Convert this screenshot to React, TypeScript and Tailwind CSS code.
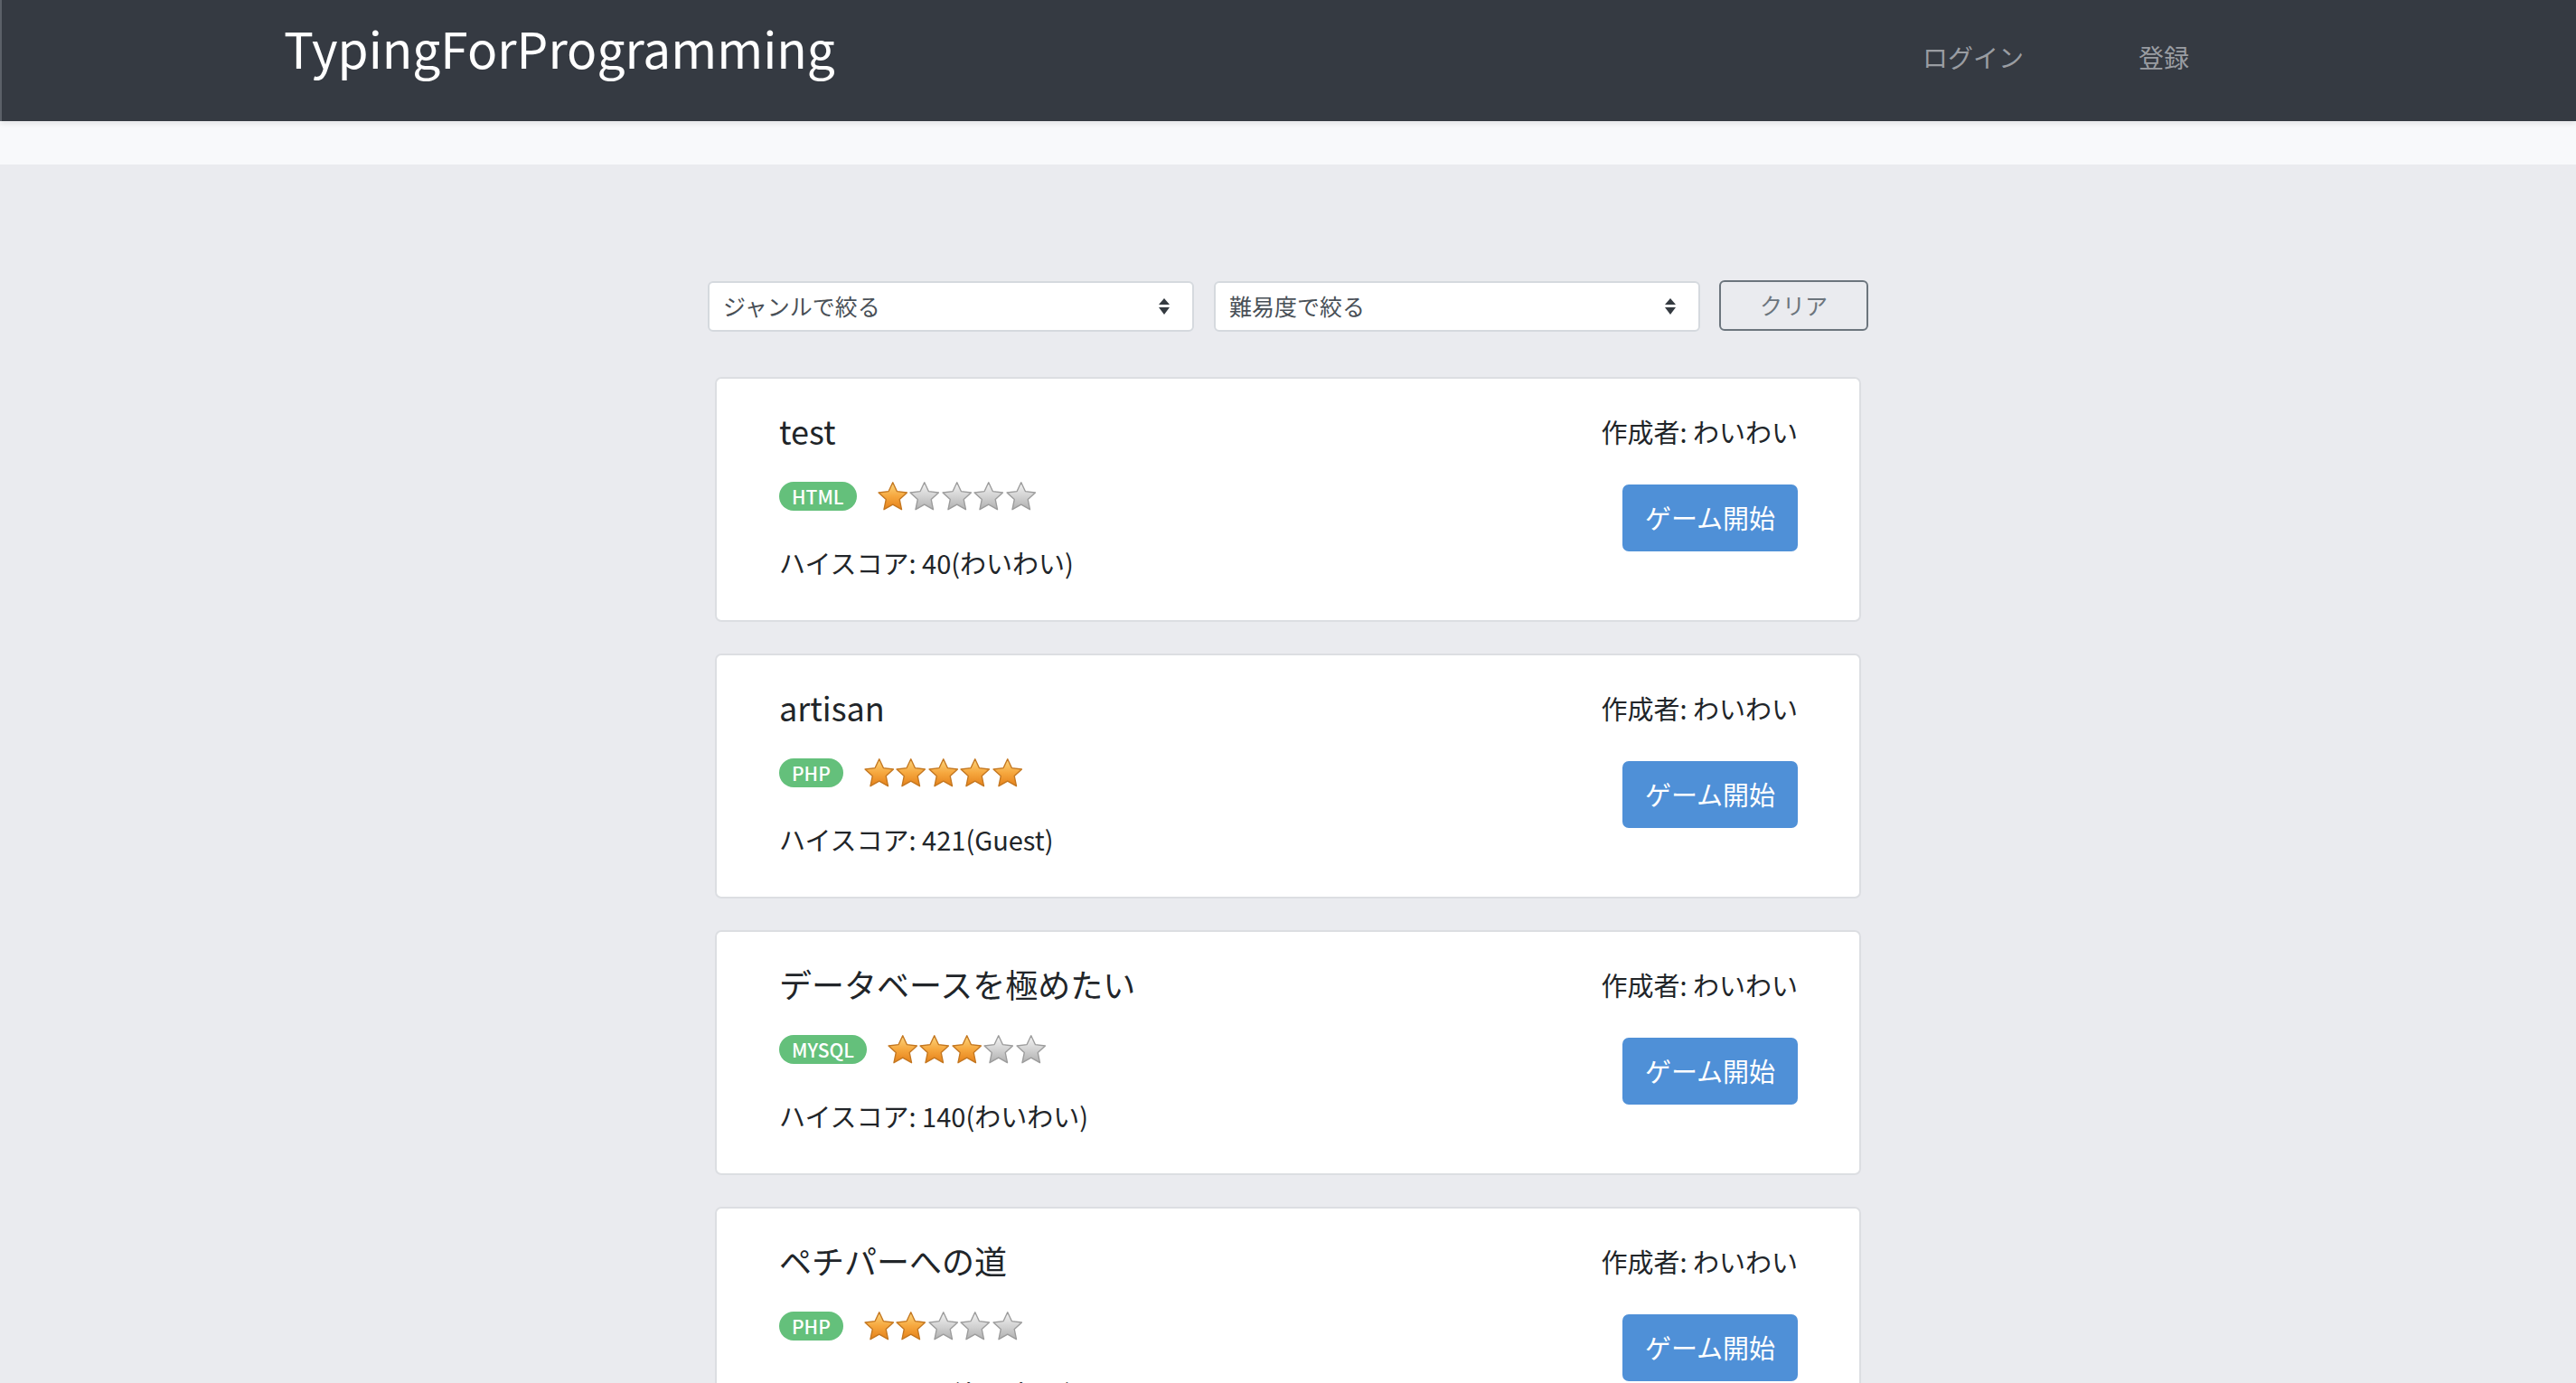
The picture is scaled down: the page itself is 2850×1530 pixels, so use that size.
import React from "react";

const FONT = { fontFamily: '"Noto Sans CJK JP", "Noto Sans", sans-serif' };

function Star({ on }: { on: boolean }) {
  return (
    <svg width="35.5" height="34" viewBox="0 0 36 34" className="block shrink-0">
      <defs>
        <linearGradient id="starOn" x1="0" y1="0" x2="0" y2="1">
          <stop offset="0" stopColor="#fcd67e" />
          <stop offset="0.5" stopColor="#f6a83f" />
          <stop offset="1" stopColor="#e5811a" />
        </linearGradient>
        <linearGradient id="starOff" x1="0" y1="0" x2="0" y2="1">
          <stop offset="0" stopColor="#f4f4f4" />
          <stop offset="0.55" stopColor="#d0d0d0" />
          <stop offset="1" stopColor="#b0b0b0" />
        </linearGradient>
      </defs>
      <path
        d="M18 1.5 L22.7 11.5 L33.9 12.9 L25.6 20.6 L27.9 31.9 L18 26.3 L8.1 31.9 L10.4 20.6 L2.1 12.9 L13.3 11.5 Z"
        fill={on ? "url(#starOn)" : "url(#starOff)"}
        stroke={on ? "#c47720" : "#9c9c9c"}
        strokeWidth="1.4"
        strokeLinejoin="round"
      />
    </svg>
  );
}

function SelectArrow() {
  return (
    <svg width="14" height="18" viewBox="0 0 14 18" className="block">
      <path d="M7 0 L13 7 L1 7 Z" fill="#343a40" />
      <path d="M1 10 L13 10 L7 18 Z" fill="#343a40" />
    </svg>
  );
}

type Item = { title: string; lang: string; level: number; score: string };

const items: Item[] = [
  { title: "test", lang: "HTML", level: 1, score: "ハイスコア: 40(わいわい)" },
  { title: "artisan", lang: "PHP", level: 5, score: "ハイスコア: 421(Guest)" },
  { title: "データベースを極めたい", lang: "MYSQL", level: 3, score: "ハイスコア: 140(わいわい)" },
  { title: "ペチパーへの道", lang: "PHP", level: 2, score: "ハイスコア: 80(わいわい)" },
];

function Card({ item }: { item: Item }) {
  return (
    <div className="flex justify-between rounded-[7px] border-2 border-[#dcdee2] bg-white pl-[69px] pr-[68px] pt-[36px] pb-[42px]">
      <div className="flex flex-col">
        <div className="text-[36px] leading-[43px] text-[#212529]">{item.title}</div>
        <div className="mt-[34px] flex h-[34px] items-center">
          <span className="flex h-[32px] items-center rounded-full bg-[#64c07b] px-[14px] text-[21px] font-medium leading-none text-white">
            {item.lang}
          </span>
          <div className="ml-[22px] flex">
            {[0, 1, 2, 3, 4].map((i) => (
              <Star key={i} on={i < item.level} />
            ))}
          </div>
        </div>
        <div className="mt-[34px] text-[29px] leading-[44px] text-[#212529]">{item.score}</div>
      </div>
      <div className="flex flex-col items-end">
        <div className="text-[29px] leading-[44px] text-[#212529]">作成者: わいわい</div>
        <button className="mt-[37px] flex h-[74px] w-[194px] items-center justify-center rounded-[7px] bg-[#4f90d7] text-[29px] text-white">
          ゲーム開始
        </button>
      </div>
    </div>
  );
}

export default function App() {
  return (
    <div className="h-[1530px] w-full overflow-hidden bg-[#eaebef]" style={FONT}>
      <header className="relative z-10 flex h-[134px] items-start border-l-2 border-[#5b6068] bg-[#353a42] shadow-[0_3px_6px_rgba(0,0,0,0.08)]">
        <div className="w-[2125px] pl-[312px] pt-[25px]">
          <span className="text-[55px] leading-[55px] text-white">TypingForProgramming</span>
        </div>
        <div className="flex pt-[49px] text-[28px] leading-[28px] text-[#9a9da2]">
          <span className="w-[239px]">ログイン</span>
          <span>登録</span>
        </div>
      </header>
      <div className="h-[48px] bg-[#f8f9fb]" />
      <main className="mx-auto w-[1284px] pt-[129px]">
        <div className="flex items-start">
          <div className="flex h-[56px] w-[538px] items-center justify-between rounded-[6px] border-2 border-[#d5d9de] bg-white pl-[15px] pr-[24px] text-[25px] text-[#495057]">
            <span>ジャンルで絞る</span>
            <SelectArrow />
          </div>
          <div className="ml-[22px] flex h-[56px] w-[538px] items-center justify-between rounded-[6px] border-2 border-[#d5d9de] bg-white pl-[15px] pr-[24px] text-[25px] text-[#495057]">
            <span>難易度で絞る</span>
            <SelectArrow />
          </div>
          <button className="ml-[21px] -mt-[1px] flex h-[56px] w-[165px] items-center justify-center rounded-[6px] border-2 border-[#6c757d] text-[25px] text-[#6c757d]">
            クリア
          </button>
        </div>
        <div className="mx-[8px] mt-[50px] flex flex-col gap-[35px]">
          {items.map((it, i) => (
            <Card key={i} item={it} />
          ))}
        </div>
      </main>
    </div>
  );
}
